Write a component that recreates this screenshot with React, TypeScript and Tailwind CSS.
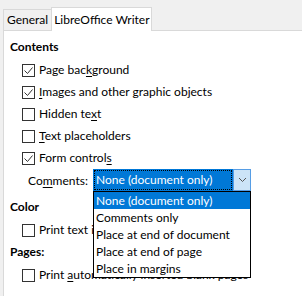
import React from "react";

const U = ({ children }: { children: React.ReactNode }) => (
  <span className="underline underline-offset-[2px] decoration-1">{children}</span>
);

function Check({ checked }: { checked?: boolean }) {
  return (
    <div className="w-[13px] h-[13px] shrink-0 border border-[#333333] bg-white flex items-center justify-center">
      {checked && (
        <svg width="11" height="11" viewBox="0 0 11 11">
          <path d="M1.5 5.5 L4.5 8.5 L9.5 2.5" stroke="#333333" fill="none" strokeWidth="1" />
        </svg>
      )}
    </div>
  );
}

function Row({ checked, children }: { checked?: boolean; children: React.ReactNode }) {
  return (
    <div className="flex items-center h-[22px] pl-[12px] gap-[4px] whitespace-nowrap">
      <Check checked={checked} />
      <span>{children}</span>
    </div>
  );
}

const items = [
  "None (document only)",
  "Comments only",
  "Place at end of document",
  "Place at end of page",
  "Place in margins",
];

export default function App() {
  return (
    <div className="w-[302px] h-[296px] overflow-hidden bg-[#f0f0f0] text-[12px] text-black font-['Lato',sans-serif] flex flex-col">
      <div className="flex items-end h-[31px] pl-[3px] shrink-0">
        <div className="h-[21px] pl-[3px] pr-[3px] border border-b-0 border-[#d9d9d9] flex items-center leading-none mb-[1px] whitespace-nowrap">
          General
        </div>
        <div className="h-[24px] pl-[2px] pr-[1px] border border-b-0 border-[#d9d9d9] bg-white flex items-center leading-none relative z-10 -ml-[1px] whitespace-nowrap">
          LibreOffice Writer
        </div>
      </div>
      <div className="flex-1 ml-[3px] -mt-[1px] border-t border-l border-[#d9d9d9] bg-white pl-[6px] pt-[8px]">
        <div className="h-[16px] leading-[16px] font-bold">Contents</div>
        <div className="mt-[4px]">
          <Row checked>
            Page bac<U>k</U>ground
          </Row>
          <Row checked>
            <U>I</U>mages and other graphic objects
          </Row>
          <Row>
            Hidden te<U>x</U>t
          </Row>
          <Row>
            <U>T</U>ext placeholders
          </Row>
          <Row checked>
            Form control<U>s</U>
          </Row>
          <div className="flex items-center h-[22px] pl-[18px] whitespace-nowrap">
            <span className="w-[65px] pt-[2px]">
              Co<U>m</U>ments:
            </span>
            <div className="relative flex h-[22px] w-[158px]">
              <div className="flex-1 bg-[#0078d7] p-[1px]">
                <div className="h-full border border-dotted border-white outline outline-1 outline-dotted outline-black -outline-offset-1 flex items-center pl-[1px] text-white">
                  None (document only)
                </div>
              </div>
              <div className="w-[18px] bg-[#cce4f7] border border-[#569de5] flex items-center justify-center">
                <svg width="9" height="6" viewBox="0 0 9 6">
                  <path d="M1 1 L4.5 4.5 L8 1" stroke="#555555" fill="none" strokeWidth="1" />
                </svg>
              </div>
              <div className="absolute left-0 top-full w-[158px] border border-black bg-white z-20">
                {items.map((it, i) => (
                  <div
                    key={it}
                    className={
                      i === 0
                        ? "h-[17px] flex items-center pl-[2px] bg-[#0078d7] text-white"
                        : "h-[17px] flex items-center pl-[2px]"
                    }
                  >
                    {it}
                  </div>
                ))}
              </div>
            </div>
          </div>
        </div>
        <div className="mt-[8px] h-[16px] leading-[16px] font-bold">Color</div>
        <div className="mt-[4px]">
          <Row>Print text in black</Row>
        </div>
        <div className="mt-[3px] h-[16px] leading-[16px] font-bold">Pages:</div>
        <div className="mt-[4px]">
          <Row>
            Print <U>a</U>utomatically inserted blank pages
          </Row>
        </div>
      </div>
    </div>
  );
}
